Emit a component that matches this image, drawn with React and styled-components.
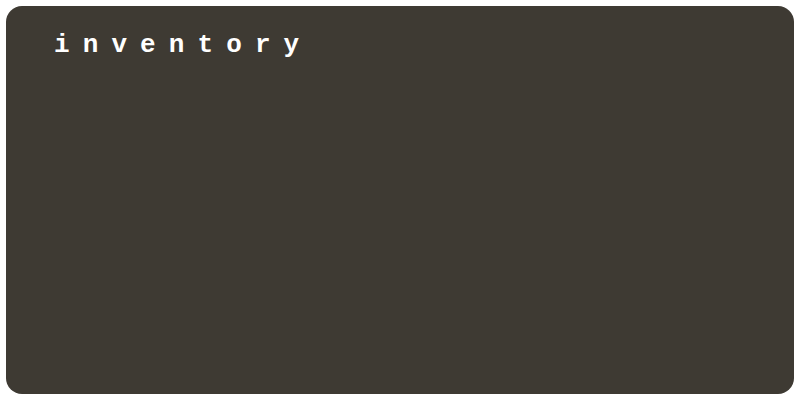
import React from 'react';
import styled, { createGlobalStyle } from 'styled-components';

const GlobalStyle = createGlobalStyle`
  html, body {
    margin: 0;
    padding: 0;
    background: #ffffff;
  }
  body {
    width: 800px;
    height: 400px;
  }
`;

const Panel = styled.div`
  box-sizing: border-box;
  margin: 6px;
  width: 788px;
  height: 388px;
  background-color: #3e3a33;
  border-radius: 16px;
  padding: 24px 0 0 48px;
`;

const Title = styled.h1`
  margin: 0;
  font-family: 'Courier New', 'Liberation Mono', monospace;
  font-weight: bold;
  font-size: 26px;
  line-height: 30px;
  letter-spacing: 13.1px;
  color: #ffffff;
`;

function App() {
  return (
    <>
      <GlobalStyle />
      <Panel>
        <Title>inventory</Title>
      </Panel>
    </>
  );
}

export default App;
